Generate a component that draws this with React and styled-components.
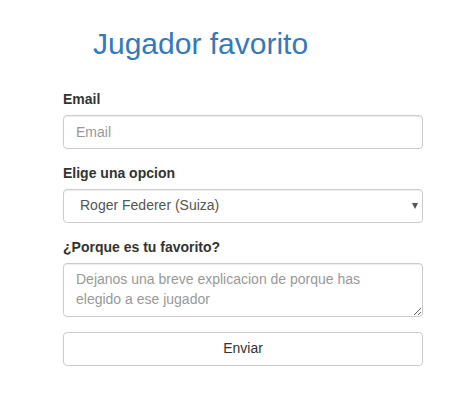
import React from 'react';
import styled, { createGlobalStyle } from 'styled-components';

const GlobalStyle = createGlobalStyle`
  * { box-sizing: border-box; }
  body {
    margin: 0;
    background: #fff;
    font-family: "Liberation Sans", Helvetica, Arial, sans-serif;
    font-size: 14px;
    line-height: 1.42857;
    color: #333;
  }
`;

const Page = styled.div`
  padding: 27px 0 0 63px;
  width: 423px;
`;

const Title = styled.h2`
  margin: 0 0 30px 30px;
  font-size: 30px;
  font-weight: 500;
  line-height: 1.1;
  color: #337ab7;
`;

const Form = styled.form`
  display: flex;
  flex-direction: column;
  gap: 15px;
`;

const Group = styled.div`
  display: flex;
  flex-direction: column;
`;

const Label = styled.label`
  font-weight: 700;
  margin-bottom: 5px;
`;

const fieldBase = `
  display: block;
  width: 100%;
  padding: 6px 12px;
  font-family: "Liberation Sans", Helvetica, Arial, sans-serif;
  font-size: 14px;
  line-height: 1.42857;
  color: #555;
  background: #fff;
  border: 1px solid #ccc;
  border-radius: 4px;
  box-shadow: inset 0 1px 1px rgba(0, 0, 0, 0.075);
  outline: none;
  &::placeholder { color: #999; }
`;

const Input = styled.input`
  ${fieldBase}
  height: 34px;
`;

const SelectWrap = styled.div`
  position: relative;
`;

const Select = styled.select`
  ${fieldBase}
  height: 34px;
  padding-left: 16px;
  appearance: none;
  -webkit-appearance: none;
`;

const Arrow = styled.span`
  position: absolute;
  right: 5px;
  top: 14px;
  width: 0;
  height: 0;
  border-left: 3px solid transparent;
  border-right: 3px solid transparent;
  border-top: 6px solid #555;
  pointer-events: none;
`;

const TextArea = styled.textarea`
  ${fieldBase}
  height: 54px;
  padding-right: 40px;
  resize: vertical;
`;

const Button = styled.button`
  display: block;
  width: 100%;
  height: 34px;
  padding: 6px 12px;
  font-family: "Liberation Sans", Helvetica, Arial, sans-serif;
  font-size: 14px;
  line-height: 1.42857;
  color: #333;
  background: #fff;
  border: 1px solid #ccc;
  border-radius: 4px;
  cursor: pointer;
`;

export default function App() {
  return (
    <>
      <GlobalStyle />
      <Page>
        <Title>Jugador favorito</Title>
        <Form onSubmit={(e) => e.preventDefault()}>
          <Group>
            <Label htmlFor="email">Email</Label>
            <Input id="email" type="email" placeholder="Email" />
          </Group>
          <Group>
            <Label htmlFor="opcion">Elige una opcion</Label>
            <SelectWrap>
              <Select id="opcion" defaultValue="federer">
                <option value="federer">Roger Federer (Suiza)</option>
                <option value="nadal">Rafael Nadal (España)</option>
                <option value="djokovic">Novak Djokovic (Serbia)</option>
              </Select>
              <Arrow />
            </SelectWrap>
          </Group>
          <Group>
            <Label htmlFor="porque">¿Porque es tu favorito?</Label>
            <TextArea
              id="porque"
              rows={2}
              placeholder="Dejanos una breve explicacion de porque has elegido a ese jugador"
            />
          </Group>
          <Button type="submit">Enviar</Button>
        </Form>
      </Page>
    </>
  );
}
